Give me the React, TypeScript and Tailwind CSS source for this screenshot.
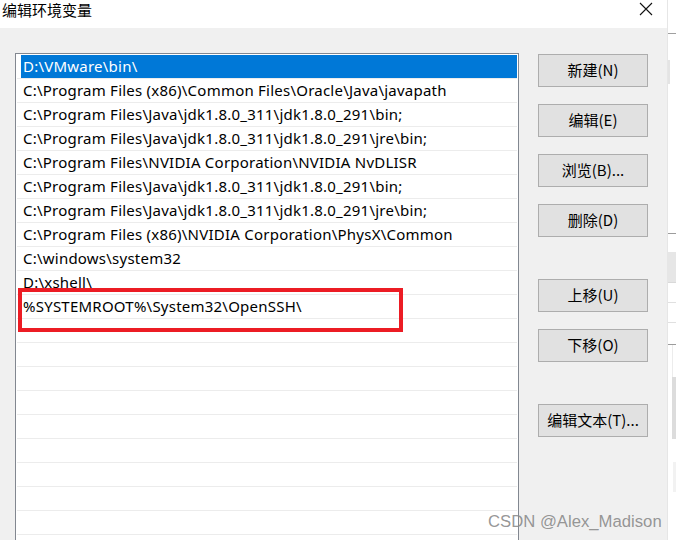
const rows = [
  "D:\\VMware\\bin\\",
  "C:\\Program Files (x86)\\Common Files\\Oracle\\Java\\javapath",
  "C:\\Program Files\\Java\\jdk1.8.0_311\\jdk1.8.0_291\\bin;",
  "C:\\Program Files\\Java\\jdk1.8.0_311\\jdk1.8.0_291\\jre\\bin;",
  "C:\\Program Files\\NVIDIA Corporation\\NVIDIA NvDLISR",
  "C:\\Program Files\\Java\\jdk1.8.0_311\\jdk1.8.0_291\\bin;",
  "C:\\Program Files\\Java\\jdk1.8.0_311\\jdk1.8.0_291\\jre\\bin;",
  "C:\\Program Files (x86)\\NVIDIA Corporation\\PhysX\\Common",
  "C:\\windows\\system32",
  "D:\\xshell\\",
  "%SYSTEMROOT%\\System32\\OpenSSH\\",
  "", "", "", "", "", "", "", "", "", "",
]

function Btn({ label, className = "" }: { label: string; className?: string }) {
  return (
    <div
      className={
        "w-[110px] h-[33px] shrink-0 flex items-center justify-center bg-[#e1e1e1] border border-[#adadad] text-[15px] text-black " +
        className
      }
    >
      {label}
    </div>
  )
}

export default function App() {
  return (
    <div
      className="relative w-[676px] h-[540px] overflow-hidden flex bg-white"
      style={{ fontFamily: '"Noto Sans", "Noto Sans CJK SC", sans-serif' }}
    >
      <div className="w-[667px] h-[540px] flex flex-col">
        {/* title bar */}
        <div className="h-[28px] shrink-0 bg-white flex items-start justify-between">
          <div
            className="pl-[2px] pt-[1px] text-[15px] leading-[18px] text-black"
            style={{ fontFamily: '"Noto Sans CJK SC", sans-serif' }}
          >
            编辑环境变量
          </div>
          <svg width="14" height="14" viewBox="0 0 14 14" className="mt-[2px] mr-[14px]">
            <path d="M1 1 L13 13 M13 1 L1 13" stroke="#111" strokeWidth="1.1" fill="none" />
          </svg>
        </div>

        {/* body */}
        <div className="flex-1 min-h-0 overflow-hidden bg-[#f0f0f0] flex items-start pl-[15px] pt-[25px]">
          <div className="w-[504px] h-[520px] shrink-0 bg-white border border-[#828790] pt-[1px] px-[1px]">
            {rows.map((r, i) => (
              <div key={i} className="h-[24px] border-b border-[#ececec] flex">
                {i === 0 ? (
                  <div className="ml-[4px] flex-1 h-[23px] bg-[#0078d7] text-white text-[15px] leading-[23px] pl-[2px] tracking-[0.23px]">
                    {r}
                  </div>
                ) : (
                  <div className="ml-[4px] flex-1 h-[23px] text-black text-[15px] leading-[23px] pl-[2px] whitespace-nowrap tracking-[0.23px]">
                    {r}
                  </div>
                )}
              </div>
            ))}
          </div>

          <div
            className="ml-[19px] pt-[1px] flex flex-col"
            style={{ fontFamily: '"Noto Sans CJK SC", sans-serif' }}
          >
            <div className="flex flex-col gap-[17px]">
              <Btn label="新建(N)" />
              <Btn label="编辑(E)" />
              <Btn label="浏览(B)..." />
              <Btn label="删除(D)" />
            </div>
            <div className="flex flex-col gap-[17px] mt-[42px]">
              <Btn label="上移(U)" />
              <Btn label="下移(O)" />
            </div>
            <Btn label="编辑文本(T)..." className="mt-[42px]" />
          </div>
        </div>
      </div>

      {/* background window strip */}
      <div className="w-[9px] flex flex-col bg-white border-l border-[#e6e6e6]">
        <div className="h-[33px] shrink-0" />
        <div className="h-[1px] shrink-0 bg-[#a0a0a0]" />
        <div className="h-[199px] shrink-0 flex">
          <div className="w-[2px] mt-[26px] h-[24px] bg-[#e4e4e4]" />
        </div>
        <div className="h-[1px] shrink-0 bg-[#9c9c9c]" />
        <div className="h-[18px] shrink-0" />
        <div className="h-[31px] shrink-0 bg-[#e6e6e6] border-b border-[#d9d9d9]" />
        <div className="h-[20px] shrink-0 border-b border-[#e0e0e0]" />
        <div className="h-[20px] shrink-0 border-b border-[#e0e0e0]" />
        <div className="h-[21px] shrink-0" />
        <div className="h-[1px] shrink-0 bg-[#9c9c9c]" />
        <div className="h-[32px] shrink-0 flex">
          <div className="ml-[4px] w-[1px] bg-[#ececec]" />
        </div>
        <div className="h-[62px] shrink-0 flex justify-end">
          <div className="w-[4px] bg-[#dcdcdc]" />
        </div>
        <div className="h-[23px] shrink-0" />
        <div className="h-[30px] shrink-0 flex justify-end">
          <div className="w-[3px] bg-[#f2f2f2]" />
        </div>
      </div>

      {/* highlight box */}
      <div className="absolute left-[18px] top-[288px] w-[385px] h-[44px] border-[4px] border-[#ec1c24]" />

      {/* watermark */}
      <div
        className="absolute left-[488px] top-[511px] text-[16.7px] leading-[22px] text-[#8a8a8a]/90"
        style={{ fontFamily: '"Liberation Sans", Arial, sans-serif' }}
      >
        CSDN @Alex_Madison
      </div>
    </div>
  )
}
